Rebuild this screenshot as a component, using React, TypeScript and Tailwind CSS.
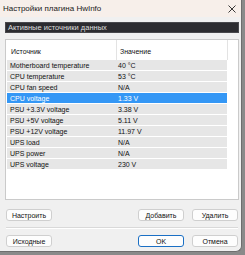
const rows = [
  ["Motherboard temperature", "40 °C"],
  ["CPU temperature", "53 °C"],
  ["CPU fan speed", "N/A"],
  ["CPU voltage", "1.33 V"],
  ["PSU +3.3V voltage", "3.38 V"],
  ["PSU +5V voltage", "5.11 V"],
  ["PSU +12V voltage", "11.97 V"],
  ["UPS load", "N/A"],
  ["UPS power", "N/A"],
  ["UPS voltage", "230 V"],
];

const Btn = ({ label, primary }: { label: string; primary?: boolean }) => (
  <button
    className={
      "w-[46px] h-[12px] rounded-[3px] bg-[#fdfdfd] text-[7px] leading-none text-[#111] flex items-center justify-center border " +
      (primary ? "border-[#1a6fc4]" : "border-[#cfcfcf]")
    }
  >
    {label}
  </button>
);

const App = () => {
  return (
    <div className="w-[245px] h-[255px] bg-[#8a8a8a] font-['Liberation_Sans',sans-serif]">
      <div className="w-[242px] h-[252px] bg-[#f0f0f0] border-r border-b border-[#6e6e6e] rounded-br-[6px] overflow-hidden flex flex-col">
        <div className="h-[17px] bg-[#f7efea] flex items-center justify-between pl-[3px] pr-[5px]">
          <span className="text-[8px] text-[#1a1a1a]">Настройки плагина HwInfo</span>
          <svg width="8" height="8" viewBox="0 0 8 8">
            <path d="M0.5 0.5 L7.5 7.5 M7.5 0.5 L0.5 7.5" stroke="#222" strokeWidth="0.9" />
          </svg>
        </div>

        <div className="pl-[5px] pr-[2px]">
          <div className="mt-[5px] h-[11px] bg-[#2c2c30] border border-[#48484c] flex items-center pl-[2px]">
            <span className="text-[7.5px] leading-none text-[#dedede]">Активные источники данных</span>
          </div>

          <div className="mt-[6px] h-[161px] border border-[#cacaca] bg-white pl-[1px]">
            <div className="h-[20px] w-[221px] flex text-[7px] leading-none text-[#111]">
              <div className="w-[110px] border-r border-[#e3e3e3] pl-[4px] pt-[8px]">Источник</div>
              <div className="w-[111px] border-r border-[#e3e3e3] pl-[3px] pt-[8px]">Значение</div>
            </div>
            {rows.map(([name, value]) => {
              const sel = name === "CPU voltage";
              return (
                <div
                  key={name}
                  className={
                    "w-[220px] h-[11px] flex items-center text-[7px] leading-none border-b border-white " +
                    (sel ? "bg-[#3497f5] text-white" : "bg-[#e6e6e6] text-[#111]")
                  }
                >
                  <div className="w-[110px] pl-[3px] pt-[1px]">{name}</div>
                  <div className="pl-[1px] pt-[1px]">{value}</div>
                </div>
              );
            })}
          </div>

          <div className="mt-[9px] flex pl-[1px] pr-[1px]">
            <Btn label="Настроить" />
            <div className="ml-auto flex gap-[8px]">
              <Btn label="Добавить" />
              <Btn label="Удалить" />
            </div>
          </div>

          <div className="mt-[6px] ml-[1px] mr-[1px] h-[2px] bg-[#d9d9d9] border-b border-white" />

          <div className="mt-[6px] flex pl-[1px] pr-[1px]">
            <Btn label="Исходные" />
            <div className="ml-auto flex gap-[8px]">
              <Btn label="OK" primary />
              <Btn label="Отмена" />
            </div>
          </div>
        </div>
      </div>
    </div>
  );
};

export default App;
